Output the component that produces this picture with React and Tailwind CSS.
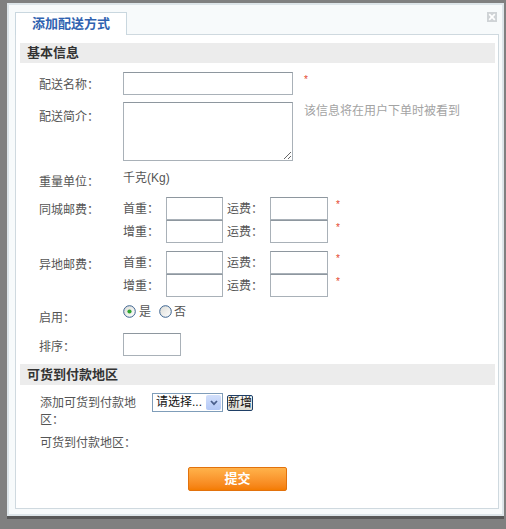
import React from 'react';

// little red "required" mark after a field
function Req({ className = 'ml-[11px]' }) {
  return <span className={`${className} self-start pt-[3px] text-[10px] leading-[10px] text-[#e4462c]`}>*</span>;
}

function Radio({ checked }) {
  return (
    <svg width="13" height="13" viewBox="0 0 13 13" className="shrink-0">
      <defs>
        <linearGradient id="radioFill" x1="0" y1="0" x2="1" y2="1">
          <stop offset="0" stopColor="#dcdcd6" />
          <stop offset="1" stopColor="#ffffff" />
        </linearGradient>
      </defs>
      <circle cx="6.5" cy="6.5" r="5.8" fill="url(#radioFill)" stroke="#3a628f" strokeWidth="1" />
      {checked && <circle cx="6.5" cy="6.5" r="2.1" fill="#2fa52f" />}
    </svg>
  );
}

const box = 'block h-[23px] border border-[#a9b1b8] border-t-[#8e979f] bg-white outline-none';

function FeeLine({ first, second }) {
  return (
    <div className="flex h-[23px] items-center">
      <span className="w-[43px]">{first}</span>
      <input className={`${box} w-[57px]`} />
      <span className="ml-[4px] w-[43px]">{second}</span>
      <input className={`${box} w-[58px]`} />
      <Req className="ml-[8px]" />
    </div>
  );
}

function Section({ title, className }) {
  return (
    <div className={`${className} flex items-center bg-[#ececec] pl-[7px] text-[13px] font-bold text-[#333]`}>
      {title}
    </div>
  );
}

export default function App() {
  return (
    <div className="min-h-[529px] bg-[#808080] pl-[7px] pt-[3px] font-['Liberation_Sans','Noto_Sans_CJK_SC',sans-serif] text-[12px] text-[#555]">
      <div className="h-[513px] w-[497px] border-2 border-[#dde5e9] bg-[#f7fafb] px-[6px] pt-[7px] shadow-[0_3px_0_#585858]">
        {/* tab strip */}
        <div className="flex items-start">
          <div className="relative z-10 -mb-px h-[23px] w-[112px] border border-b-0 border-[#c9d7df] bg-white pt-[3px] text-center text-[13px] font-bold leading-[16px] text-[#2f62b0]">
            添加配送方式
          </div>
          <div className="ml-auto mr-[-1px] flex h-[10px] w-[10px] items-center justify-center bg-[#cfd3d6]">
            <svg width="8" height="8" viewBox="0 0 8 8">
              <path d="M1.2 1.2 L6.8 6.8 M6.8 1.2 L1.2 6.8" stroke="#fff" strokeWidth="1.7" />
            </svg>
          </div>
        </div>

        <div className="h-[475px] w-[484px] border border-[#cfd9df] bg-white px-[4px] pt-[8px] leading-[16px]">
          <Section title="基本信息" className="mr-[-1px] h-[20px]" />

          <div className="mt-[9px] flex items-start">
            <div className="w-[103px] pl-[19px] pt-[5px]">配送名称：</div>
            <input className={`${box} w-[170px]`} />
            <Req />
          </div>

          <div className="mt-[7px] flex items-start">
            <div className="w-[103px] pl-[19px] pt-[7px]">配送简介：</div>
            <textarea className="block h-[59px] w-[170px] border border-[#a9b1b8] border-t-[#8e979f] bg-white outline-none" />
            <div className="ml-[11px] pt-[1px] text-[#a3a3a3]">该信息将在用户下单时被看到</div>
          </div>

          <div className="mt-[9px] flex h-[20px] items-start">
            <div className="w-[103px] pl-[19px] pt-[4px]">重量单位：</div>
            <div>千克(Kg)</div>
          </div>

          <div className="mt-[7px] flex items-start">
            <div className="w-[103px] pl-[19px] pt-[5px]">同城邮费：</div>
            <div>
              <FeeLine first="首重：" second="运费：" />
              <FeeLine first="增重：" second="运费：" />
            </div>
          </div>

          <div className="mt-[8px] flex items-start">
            <div className="w-[103px] pl-[19px] pt-[6px]">异地邮费：</div>
            <div>
              <FeeLine first="首重：" second="运费：" />
              <FeeLine first="增重：" second="运费：" />
            </div>
          </div>

          <div className="mt-[6px] flex h-[26px] items-start">
            <div className="w-[103px] pl-[19px] pt-[7px]">启用：</div>
            <div className="flex h-[17px] items-center">
              <Radio checked />
              <span className="ml-[3px]">是</span>
              <span className="ml-[8px]"><Radio /></span>
              <span className="ml-[2px]">否</span>
            </div>
          </div>

          <div className="mt-[4px] flex items-start">
            <div className="w-[103px] pl-[19px] pt-[6px]">排序：</div>
            <input className={`${box} w-[58px]`} />
          </div>

          <Section title="可货到付款地区" className="mr-[-1px] mt-[8px] h-[21px]" />

          <div className="mt-[8px] flex items-start">
            <div className="w-[132px] pl-[20px] pt-[2px] leading-[17px]">
              <div className="w-[100px]">添加可货到付款地区：</div>
            </div>
            <div className="flex h-[19px] w-[71px] items-center border border-[#7f9db9] bg-white pl-[3px] text-[#111]">
              <span className="flex-1 leading-[15px]">请选择...</span>
              <span className="mr-px flex h-[15px] w-[15px] items-center justify-center rounded-[2px] bg-gradient-to-b from-[#d3e0fb] to-[#b3c8f6]">
                <svg width="8" height="6" viewBox="0 0 8 6">
                  <path d="M1 1 L4 4.2 L7 1" fill="none" stroke="#4a5f8c" strokeWidth="1.7" />
                </svg>
              </span>
            </div>
            <button className="ml-[4px] mt-[2px] flex h-[16px] w-[26px] items-center justify-center whitespace-nowrap rounded-[2px] border border-[#1f3f66] bg-gradient-to-b from-[#fbfbf8] to-[#dcdcd2] px-0 text-[12px] leading-[14px] text-[#111]">
              新增
            </button>
          </div>

          <div className="mt-[6px] pl-[20px]">可货到付款地区：</div>

          <button className="ml-[168px] mt-[16px] block h-[24px] w-[99px] rounded-[2px] border border-[#e2720c] bg-gradient-to-b from-[#ffb24a] to-[#f47c00] text-[13px] font-bold text-white">
            提交
          </button>
        </div>
      </div>
    </div>
  );
}
